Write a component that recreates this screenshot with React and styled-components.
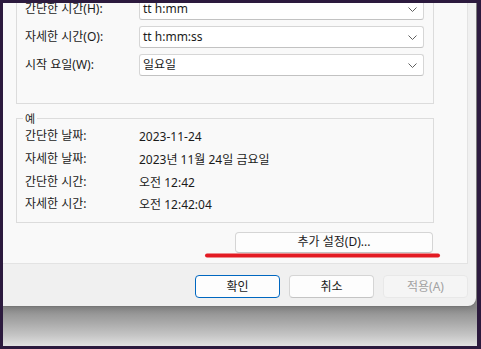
import styled, { createGlobalStyle } from "styled-components";

const GlobalStyle = createGlobalStyle`
    html, body {
        margin: 0;
        padding: 0;
        background: #2c1a3e;
    }
    body {
        font-family: "Noto Sans", "Noto Sans CJK KR", sans-serif;
        font-size: 12px;
        color: #1b1b1b;
    }
`;

const Frame = styled.div`
    width: 481px;
    height: 349px;
    box-sizing: border-box;
    padding: 3px 4px 3px 3px;
    background: #2c1a3e;
`;

const Desktop = styled.div`
    height: 100%;
    overflow: hidden;
    background: linear-gradient(180deg, #8c8c8c 0%, #8c8c8c 89%, #a8a8a8 93%, #c6c6c6 97%, #e2e2e2 100%);
`;

const Dialog = styled.div`
    width: 473px;
    height: 303px;
    display: flex;
    flex-direction: column;
    background: #f0f0f0;
    border-bottom-right-radius: 8px;
    overflow: hidden;
    box-shadow: 0 0 0 1px rgba(0, 0, 0, 0.06), 0 2px 6px rgba(0, 0, 0, 0.15);
`;

const Panel = styled.div`
    width: 465px;
    height: 261px;
    box-sizing: border-box;
    padding-left: 13px;
    background: #f9f9f9;
    border-right: 1px solid #e3e3e3;
    border-bottom: 1px solid #e3e3e3;
    overflow: hidden;
`;

const FormatGroup = styled.div`
    width: 418px;
    box-sizing: border-box;
    margin-top: -5px;
    padding: 0 9px 27px 8px;
    border: 1px solid #dcdcdc;
    border-top: none;
    display: grid;
    row-gap: 6px;
`;

const Row = styled.div`
    display: flex;
    align-items: center;
    height: ${(p) => p.$h || "22px"};
`;

const Label = styled.span`
    width: 114px;
    flex: none;
    line-height: 16px;
    white-space: nowrap;
`;

const Select = styled.div`
    width: 285px;
    height: 22px;
    box-sizing: border-box;
    display: flex;
    align-items: center;
    justify-content: space-between;
    padding: 0 6px 0 3px;
    background: #ffffff;
    border: 1px solid #d6d6d6;
    border-bottom-color: #c2c2c2;
    border-radius: 3px;
    line-height: 16px;
`;

const Chevron = () => (
    <svg width="9" height="5" viewBox="0 0 9 5">
        <path d="M0.5 0.5 L4.5 4.5 L8.5 0.5" fill="none" stroke="#5f5f5f" strokeWidth="1" />
    </svg>
);

const SampleGroup = styled.fieldset`
    width: 418px;
    box-sizing: border-box;
    margin: 8px 0 0;
    padding: 0 9px 6px 8px;
    border: 1px solid #dcdcdc;
    display: grid;
    grid-auto-rows: 22.67px;
    min-inline-size: 0;
`;

const Legend = styled.legend`
    font-size: 11px;
    line-height: 13px;
    padding: 0 2px;
    margin-left: -2px;
`;

const ActionRow = styled.div`
    position: relative;
    width: 418px;
    box-sizing: border-box;
    padding-right: 1px;
    margin-top: 9px;
    display: flex;
    justify-content: flex-end;
`;

const Button = styled.button`
    width: ${(p) => p.$w || "85px"};
    height: ${(p) => p.$h || "23px"};
    box-sizing: border-box;
    padding: 0;
    font-family: inherit;
    font-size: 12px;
    line-height: 16px;
    color: ${(p) => (p.$disabled ? "#a2a2a2" : "#1b1b1b")};
    background: ${(p) => (p.$disabled ? "#f5f5f5" : "#fdfdfd")};
    border: ${(p) =>
        p.$primary ? "1.5px solid #0067c0" : p.$disabled ? "1px solid #e8e8e8" : "1px solid #d5d5d5"};
    border-bottom-color: ${(p) => (p.$primary ? "#0067c0" : p.$disabled ? "#e8e8e8" : "#c4c4c4")};
    border-radius: 4px;
`;

const Mark = styled.svg`
    position: absolute;
    left: 187px;
    top: 20px;
`;

const Footer = styled.div`
    height: 42px;
    box-sizing: border-box;
    display: flex;
    justify-content: flex-end;
    align-items: flex-start;
    gap: 9px;
    padding: 11px 8px 0 0;
`;

const formats = [
    ["간단한 시간(H):", "tt h:mm"],
    ["자세한 시간(O):", "tt h:mm:ss"],
    ["시작 요일(W):", "일요일"],
];

const samples = [
    ["간단한 날짜:", "2023-11-24"],
    ["자세한 날짜:", "2023년 11월 24일 금요일"],
    ["간단한 시간:", "오전 12:42"],
    ["자세한 시간:", "오전 12:42:04"],
];

export default function App() {
    return (
        <>
            <GlobalStyle />
            <Frame>
                <Desktop>
                    <Dialog>
                        <Panel>
                            <FormatGroup>
                                {formats.map(([label, value]) => (
                                    <Row key={label}>
                                        <Label>{label}</Label>
                                        <Select>
                                            <span>{value}</span>
                                            <Chevron />
                                        </Select>
                                    </Row>
                                ))}
                            </FormatGroup>
                            <SampleGroup>
                                <Legend>예</Legend>
                                {samples.map(([label, value]) => (
                                    <Row key={label} $h="auto">
                                        <Label>{label}</Label>
                                        <span>{value}</span>
                                    </Row>
                                ))}
                            </SampleGroup>
                            <ActionRow>
                                <Button $w="198px" $h="21px">추가 설정(D)...</Button>
                                <Mark width="239" height="7" viewBox="0 0 239 7">
                                    <line x1="4" y1="3.5" x2="235" y2="3.5" stroke="#e31b23" strokeWidth="4" strokeLinecap="round" />
                                </Mark>
                            </ActionRow>
                        </Panel>
                        <Footer>
                            <Button $primary>확인</Button>
                            <Button>취소</Button>
                            <Button $disabled>적용(A)</Button>
                        </Footer>
                    </Dialog>
                </Desktop>
            </Frame>
        </>
    );
}
